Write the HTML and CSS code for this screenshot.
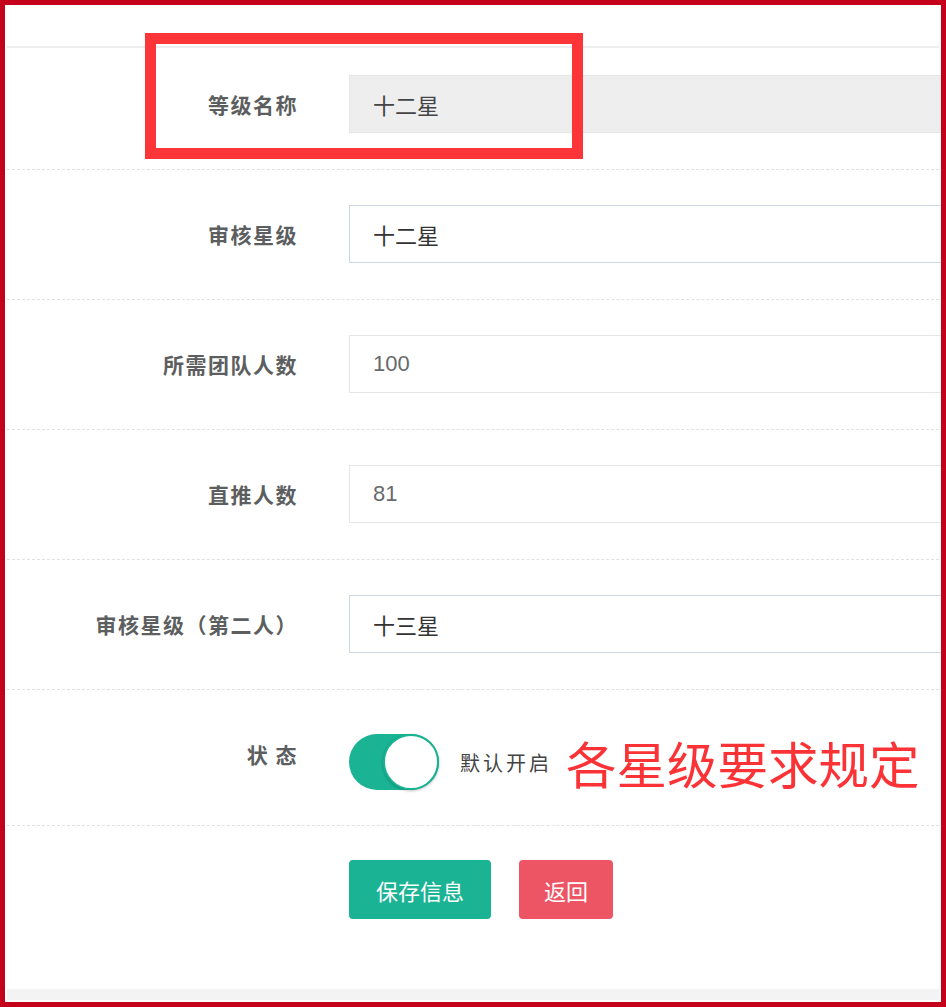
FILE: index.html
```html
<!DOCTYPE html>
<html lang="zh-CN">
<head>
<meta charset="utf-8">
<title>星级设置</title>
<link rel="stylesheet" href="styles.css">
</head>
<body>
<div class="frame">
  <div class="page">
    <div class="top-space"></div>
    <form class="form">
      <div class="row row-first">
        <label class="label">等级名称</label>
        <div class="control"><div class="input input-disabled">十二星</div></div>
      </div>
      <div class="row">
        <label class="label">审核星级</label>
        <div class="control"><div class="input input-select">十二星</div></div>
      </div>
      <div class="row">
        <label class="label">所需团队人数</label>
        <div class="control"><div class="input input-num">100</div></div>
      </div>
      <div class="row">
        <label class="label">直推人数</label>
        <div class="control"><div class="input input-num">81</div></div>
      </div>
      <div class="row">
        <label class="label">审核星级（第二人）</label>
        <div class="control"><div class="input input-select">十三星</div></div>
      </div>
      <div class="row row-switch">
        <label class="label label-switch">状 态</label>
        <div class="control control-switch">
          <span class="switch"><span class="knob"></span></span>
          <span class="switch-text">默认开启</span>
          <span class="note">各星级要求规定</span>
        </div>
      </div>
      <div class="row row-actions">
        <div class="label"></div>
        <div class="control control-actions">
          <button type="button" class="btn btn-primary">保存信息</button>
          <button type="button" class="btn btn-danger">返回</button>
        </div>
      </div>
    </form>
    <div class="footer-strip"></div>
  </div>
  <div class="annot-box"></div>
</div>
</body>
</html>
```

FILE: styles.css
```css
* { box-sizing: border-box; }

html, body {
  margin: 0;
  padding: 0;
  background: #ffffff;
}

body {
  font-family: "Noto Sans CJK SC", "Liberation Sans", sans-serif;
  color: #333333;
}

.frame {
  position: relative;
  width: 946px;
  height: 1007px;
  border: 5px solid #c4001a;
  background: #ffffff;
}

.page {
  height: 100%;
  padding: 0 2px;
  display: flex;
  flex-direction: column;
  overflow: hidden;
}

.top-space {
  height: 43px;
  border-bottom: 2px solid #eceeef;
  flex: none;
}

.form {
  display: flex;
  flex-direction: column;
}

.row {
  display: grid;
  grid-template-columns: 342px 1fr;
  align-items: center;
  padding: 35px 0 36px;
  border-top: 1px dashed #dfe2e4;
}

.row-first {
  border-top: none;
  padding: 27px 0 36px;
}

.label {
  text-align: right;
  padding-right: 51px;
  font-size: 21px;
  font-weight: 700;
  color: #5c5e60;
  letter-spacing: 1.5px;
}

.control {
  min-width: 0;
}

.input {
  height: 58px;
  width: calc(100% + 12px);
  padding: 0 23px;
  display: flex;
  align-items: center;
  font-size: 22px;
  color: #333333;
  border: 1px solid #e5e6e7;
  background: #ffffff;
}

.input-disabled {
  background: #eeeeee;
  border-color: #e5e5e5;
  color: #444444;
}

.input-select {
  border-color: #cdd5df;
}

.input-num {
  font-family: "Liberation Sans", "Noto Sans CJK SC", sans-serif;
  color: #676a6c;
  font-size: 22px;
}

.row-switch {
  align-items: start;
  padding: 44px 0 35px;
}

.label-switch {
  margin-top: 5px;
}

.control-switch {
  display: flex;
  align-items: center;
}

.switch {
  position: relative;
  display: block;
  width: 90px;
  height: 56px;
  border-radius: 28px;
  background: #1ab394;
  flex: none;
}

.knob {
  position: absolute;
  top: 0;
  right: 0;
  width: 56px;
  height: 56px;
  border-radius: 50%;
  background: #ffffff;
  border: 2px solid #1ab394;
  box-shadow: 0 1px 3px rgba(0, 0, 0, 0.25);
}

.switch-text {
  margin-left: 21px;
  font-size: 20px;
  letter-spacing: 3px;
  color: #444444;
}

.note {
  margin-left: 14px;
  font-size: 50.5px;
  line-height: 56px;
  color: #fb3336;
  white-space: nowrap;
}

.row-actions {
  padding: 34px 0 0;
}

.control-actions {
  display: flex;
  gap: 28px;
}

.btn {
  height: 59px;
  border: none;
  border-radius: 4px;
  padding: 0 27px;
  font-family: "Noto Sans CJK SC", "Liberation Sans", sans-serif;
  font-size: 22px;
  color: #ffffff;
  cursor: pointer;
}

.btn-primary {
  background: #1ab394;
}

.btn-danger {
  padding: 0 25px;
  background: #ed5565;
}

.footer-strip {
  margin-top: auto;
  margin-bottom: 2px;
  height: 11px;
  background: #f3f3f4;
  flex: none;
}

.annot-box {
  position: absolute;
  left: 140px;
  top: 28px;
  width: 438px;
  height: 126px;
  border: 11px solid #fc3638;
  pointer-events: none;
}
```
